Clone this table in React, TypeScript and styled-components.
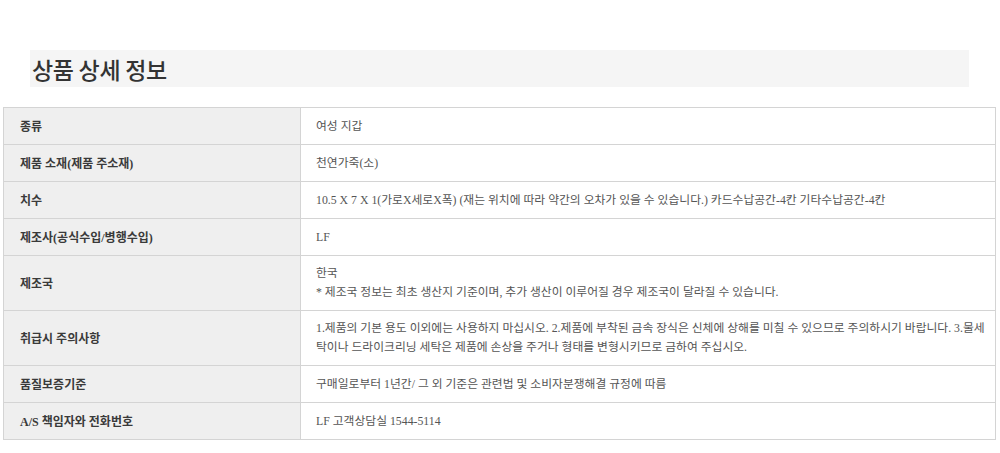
import styled, { createGlobalStyle } from "styled-components"

const rows = [
    { label: "종류", value: ["여성 지갑"] },
    { label: "제품 소재(제품 주소재)", value: ["천연가죽(소)"] },
    {
        label: "치수",
        value: ["10.5 X 7 X 1(가로X세로X폭) (재는 위치에 따라 약간의 오차가 있을 수 있습니다.) 카드수납공간-4칸 기타수납공간-4칸"]
    },
    { label: "제조사(공식수입/병행수입)", value: ["LF"] },
    {
        label: "제조국",
        value: ["한국", "* 제조국 정보는 최초 생산지 기준이며, 추가 생산이 이루어질 경우 제조국이 달라질 수 있습니다."]
    },
    {
        label: "취급시 주의사항",
        value: ["1.제품의 기본 용도 이외에는 사용하지 마십시오. 2.제품에 부착된 금속 장식은 신체에 상해를 미칠 수 있으므로 주의하시기 바랍니다. 3.물세탁이나 드라이크리닝 세탁은 제품에 손상을 주거나 형태를 변형시키므로 금하여 주십시오."]
    },
    { label: "품질보증기준", value: ["구매일로부터 1년간/ 그 외 기준은 관련법 및 소비자분쟁해결 규정에 따름"] },
    { label: "A/S 책임자와 전화번호", value: ["LF 고객상담실 1544-5114"] },
]

const GlobalStyle = createGlobalStyle`
    body {
        margin: 0;
        background: #fff;
        font-family: "Liberation Serif", "Noto Sans CJK KR", serif;
    }
`

const Page = styled.div`
    padding: 50px 4px 14px 3px;
`

const TitleBar = styled.div`
    margin: 0 27px 20px 27px;
    height: 37px;
    background: #f5f5f5;
    display: flex;
    align-items: center;
    padding-left: 2px;
`

const Title = styled.h2`
    margin: 0;
    font-family: "Noto Sans CJK KR", sans-serif;
    font-size: 23px;
    font-weight: 500;
    color: #333;
    letter-spacing: -0.3px;
`

const Table = styled.div`
    display: grid;
    grid-template-columns: 297px 1fr;
    border: 1px solid #d4d4d4;
    border-bottom: none;
`

const Label = styled.div<{ tall?: boolean }>`
    background: #efefef;
    border-right: 1px solid #d4d4d4;
    border-bottom: 1px solid #d4d4d4;
    min-height: ${({ tall }) => (tall ? "54px" : "36px")};
    display: flex;
    align-items: center;
    padding-left: 16px;
    font-size: 12px;
    font-weight: bold;
    color: #3a3a3a;
`

const Value = styled.div<{ tall?: boolean }>`
    border-bottom: 1px solid #d4d4d4;
    min-height: ${({ tall }) => (tall ? "54px" : "36px")};
    display: flex;
    flex-direction: column;
    justify-content: center;
    padding: 0 10px 0 15px;
    font-size: 11.8px;
    line-height: 19px;
    color: #555;
`

export default function App() {
    return (
        <>
            <GlobalStyle />
            <Page>
                <TitleBar>
                    <Title>상품 상세 정보</Title>
                </TitleBar>
                <Table>
                    {rows.map((r) => {
                        const tall = r.value.length > 1 || r.label === "취급시 주의사항"
                        return (
                            <>
                                <Label tall={tall}>{r.label}</Label>
                                <Value tall={tall}>
                                    {r.value.map((v) => (
                                        <div>{v}</div>
                                    ))}
                                </Value>
                            </>
                        )
                    })}
                </Table>
            </Page>
        </>
    )
}
